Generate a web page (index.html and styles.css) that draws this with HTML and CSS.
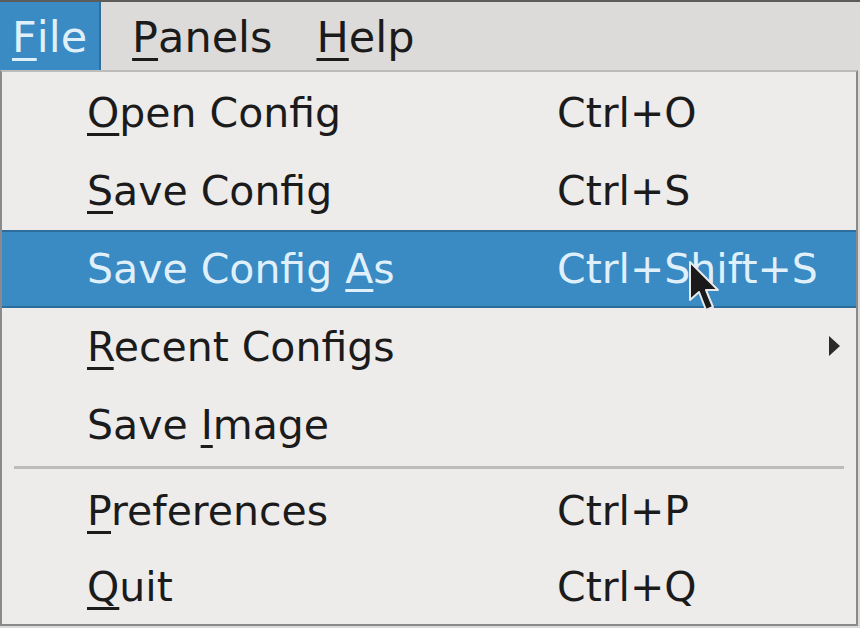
FILE: index.html
```html
<!DOCTYPE html>
<html>
<head>
<meta charset="utf-8">
<link rel="stylesheet" href="styles.css">
</head>
<body>
<div class="menubar">
  <div class="mb-item active"><u>F</u>ile</div>
  <div class="mb-item"><u>P</u>anels</div>
  <div class="mb-item"><u>H</u>elp</div>
</div>
<div class="menu">
  <div class="row"><span class="label"><u>O</u>pen Config</span><span class="key">Ctrl+O</span></div>
  <div class="row"><span class="label"><u>S</u>ave Config</span><span class="key">Ctrl+S</span></div>
  <div class="row hl"><span class="label">Save Config <u>A</u>s</span><span class="key">Ctrl+Shift+S</span></div>
  <div class="row"><span class="label"><u>R</u>ecent Configs</span><span class="key"></span><span class="arrow"></span></div>
  <div class="row"><span class="label">Save <u>I</u>mage</span><span class="key"></span></div>
  <div class="sep"></div>
  <div class="row"><span class="label"><u>P</u>references</span><span class="key">Ctrl+P</span></div>
  <div class="row last"><span class="label"><u>Q</u>uit</span><span class="key">Ctrl+Q</span></div>
</div>
<svg class="cursor" width="36" height="56" viewBox="0 0 36 56">
  <path d="M2 2 L2 40 L11 32 L18 50 L25 47 L18 30 L30 30 Z" fill="#1a1a1a" stroke="#e8e8e8" stroke-width="2" stroke-linejoin="round"/>
</svg>
</body>
</html>
```
FILE: styles.css
```css
html, body {
  margin: 0;
  padding: 0;
}
body {
  width: 860px;
  height: 628px;
  background: #dcdbda;
  font-family: "DejaVu Sans", sans-serif;
  font-size: 41px;
  color: #1b1b1b;
  position: relative;
  overflow: hidden;
}
u {
  text-decoration-thickness: 3px;
  text-underline-offset: 6px;
}
.menubar {
  height: 68px;
  border-top: 2px solid #5c5c5c;
  display: flex;
  align-items: stretch;
  background: #dcdbda;
  font-size: 43px;
}
.mb-item {
  display: flex;
  align-items: center;
  padding: 3px 12px 0 12px;
  margin-right: 20px;
  line-height: 1;
}
.mb-item.active {
  background: #3a8ac4;
  color: #dff0fb;
  margin-right: 19px;
  border-right: 2px solid #2f6f9e;
}
.menu {
  width: 854px;
  height: 550px;
  padding-top: 2px;
  background: #edeceb;
  border: 2px solid #8a8a8a;
  border-top: 2px solid #bcbcbc;
  box-sizing: content-box;
  display: flex;
  flex-direction: column;
}
.row {
  height: 78px;
  flex: none;
  display: flex;
  align-items: center;
  position: relative;
}
.row.last {
  height: 74px;
}
.label {
  width: 470px;
  padding-left: 85px;
}
.key {
  flex: 1;
}
.row.hl {
  background: #3a8ac4;
  color: #dff0fb;
  border-top: 2px solid #2d6d9b;
  border-bottom: 2px solid #2d6d9b;
  height: 74px;
}
.arrow {
  position: absolute;
  right: 16px;
  top: 28px;
  width: 0;
  height: 0;
  border-top: 10px solid transparent;
  border-bottom: 10px solid transparent;
  border-left: 11px solid #2a2a2a;
}
.sep {
  flex: none;
  height: 3px;
  background: #bdbcbb;
  margin: 2px 12px 3px 12px;
}
.cursor {
  position: absolute;
  left: 688px;
  top: 260px;
}
```
